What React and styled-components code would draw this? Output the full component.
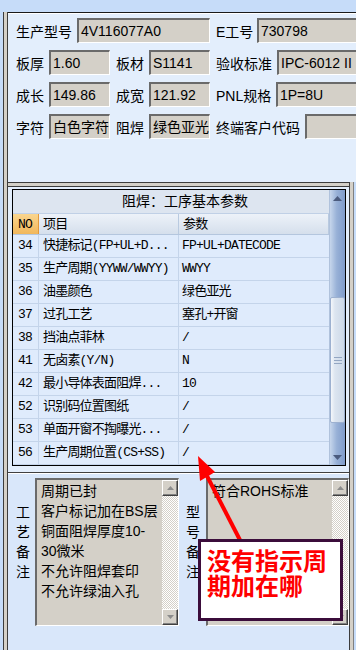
import React from 'react';
import styled, { createGlobalStyle } from 'styled-components';

const UI = `"Liberation Sans", "Noto Sans CJK SC", sans-serif`;
const GRID = `"Liberation Mono", "Noto Sans CJK SC", monospace`;

const GlobalStyle = createGlobalStyle`
  html, body { margin: 0; padding: 0; }
  body { width: 356px; height: 650px; overflow: hidden; background: #c6dcf9; }
`;

const Screen = styled.div`
  position: relative;
  width: 356px;
  height: 650px;
  display: flex;
  flex-direction: column;
  background: #c6dcf9;
  font-family: ${UI};
  color: #000;
  overflow: hidden;
`;

const TopStrip = styled.div`
  height: 12px;
  flex-shrink: 0;
`;

const Body = styled.div`
  flex: 1;
  display: flex;
  min-height: 0;
`;

const LeftRail = styled.div`
  flex-shrink: 0;
  width: 3px;
  margin-left: 3px;
  background: #d4d0c8;
  border-left: 1px solid #3c3c3c;
  border-right: 1px solid #3c3c3c;
`;

const Main = styled.div`
  flex: 1;
  display: flex;
  flex-direction: column;
  min-width: 0;
`;

/* ---------- top form ---------- */

const TopPanel = styled.div`
  height: 170px;
  flex-shrink: 0;
  box-sizing: border-box;
  border-top: 1px solid #1a1a1a;
  box-shadow: inset 0 1px #ffffff;
  background: #e3eefc;
  padding: 5px 0 0 8px;
  display: flex;
  flex-direction: column;
  gap: 7px;
  overflow: hidden;
`;

const FormRow = styled.div`
  display: flex;
  align-items: center;
  height: 25px;
`;

const Label = styled.span`
  flex-shrink: 0;
  width: ${p => p.$w}px;
  box-sizing: border-box;
  padding-left: ${p => (p.$first ? 0 : 6)}px;
  font-size: 14px;
  white-space: nowrap;
`;

const Field = styled.div`
  flex-shrink: 0;
  width: ${p => p.$w}px;
  height: 25px;
  box-sizing: border-box;
  background: #d4d0c8;
  border-style: solid;
  border-width: 2px 1px 1px 2px;
  border-color: #6a6a6a #ffffff #ffffff #6a6a6a;
  padding-left: 2px;
  font-size: 14px;
  line-height: 22px;
  white-space: nowrap;
  overflow: hidden;
`;

/* ---------- lower area ---------- */

const Lower = styled.div`
  flex: 1;
  display: flex;
  min-height: 0;
`;

const LowerMain = styled.div`
  flex: 1;
  display: flex;
  flex-direction: column;
  min-width: 0;
`;

const RightRail = styled.div`
  flex-shrink: 0;
  width: 3px;
  margin-right: 2px;
  background: #d4d0c8;
  border-left: 1px solid #3c3c3c;
  border-right: 1px solid #808080;
`;

const Splitter = styled.div`
  height: 3px;
  flex-shrink: 0;
  background: #d4d0c8;
  border-top: 1px solid #3c3c3c;
  border-bottom: 1px solid #3c3c3c;
`;

const MiddlePanel = styled.div`
  height: 286px;
  flex-shrink: 0;
  box-sizing: border-box;
  background: #e3eefc;
  padding: 2px 3px 0 4px;
  border-bottom: 1px solid #404040;
`;

const TableBox = styled.div`
  height: 277px;
  box-sizing: border-box;
  border: 1px solid #000;
  display: flex;
  background: #dfebfc;
`;

const Grid = styled.div`
  flex: 1;
  display: flex;
  flex-direction: column;
  min-width: 0;
`;

const Title = styled.div`
  height: 24px;
  box-sizing: border-box;
  border-bottom: 1px solid #c0d0e6;
  background: #dde5f0;
  padding-left: 109px;
  font-size: 14px;
  line-height: 23px;
  white-space: nowrap;
`;

const Cols = `grid-template-columns: 26px 140px 1fr;`;

const HeadRow = styled.div`
  display: grid;
  ${Cols}
  height: 21px;
  box-sizing: border-box;
  border-bottom: 1px solid #b4c6de;
`;

const HeadCell = styled.div`
  box-sizing: border-box;
  border-right: 1px solid ${p => (p.$no ? '#e39a3c' : '#b9cae0')};
  background: ${p =>
    p.$no
      ? 'linear-gradient(#fad58e, #f1b75c)'
      : 'linear-gradient(#edf2f9, #d5dfec)'};
  padding-left: ${p => (p.$no ? 5 : 4)}px;
  font-family: ${GRID};
  font-size: 13px;
  letter-spacing: -0.8px;
  line-height: 21px;
  white-space: nowrap;
  overflow: hidden;
`;

const DataRow = styled.div`
  display: grid;
  ${Cols}
  height: 23px;
  box-sizing: border-box;
  border-bottom: 1px solid #c4d4ea;
`;

const Cell = styled.div`
  box-sizing: border-box;
  border-right: 1px solid #c4d4ea;
  padding-left: ${p => p.$pad}px;
  font-family: ${GRID};
  font-size: 13px;
  letter-spacing: -0.8px;
  line-height: 22px;
  white-space: nowrap;
  overflow: hidden;
  &:last-child { border-right: none; }
`;

const VScroll = styled.div`
  flex-shrink: 0;
  width: 16px;
  display: flex;
  flex-direction: column;
  background: linear-gradient(90deg, #c6d6ec 0%, #98b1d7 45%, #7f9bca 100%);
  border-left: 1px solid #b0c2dc;
  box-sizing: border-box;
`;

const ArrowZone = styled.div`
  height: 16px;
  flex-shrink: 0;
  display: flex;
  align-items: center;
  justify-content: center;
`;

const Track = styled.div`
  height: ${p => p.$h}px;
  flex-shrink: 0;
`;

const Thumb = styled.div`
  height: 126px;
  flex-shrink: 0;
  box-sizing: border-box;
  border: 1px solid #9db1d0;
  border-radius: 2px;
  background: linear-gradient(90deg, #f4f7fb 0%, #dce5f0 30%, #ccd8e8 100%);
  display: flex;
  flex-direction: column;
  align-items: center;
  justify-content: center;
  gap: 2px;
`;

const Grip = styled.div`
  width: 8px;
  height: 1px;
  background: #93a6c2;
`;

/* ---------- bottom memos ---------- */

const BottomPanel = styled.div`
  flex: 1;
  display: flex;
  background: #d9e7fa;
  border-top: 1px solid #ffffff;
  padding: 4px 0 0 8px;
`;

const VLabel = styled.div`
  flex-shrink: 0;
  width: 14px;
  margin-left: ${p => p.$ml}px;
  margin-right: ${p => p.$mr}px;
  padding-top: 24px;
  font-size: 14px;
  line-height: 20px;
  display: flex;
  flex-direction: column;
`;

const Memo = styled.div`
  flex-shrink: 0;
  width: ${p => p.$w}px;
  height: 148px;
  box-sizing: border-box;
  border-style: solid;
  border-width: 2px 1px 1px 2px;
  border-color: #6a6a6a #ffffff #ffffff #6a6a6a;
  background: #d4d0c8;
  display: flex;
`;

const MemoText = styled.div`
  flex: 1;
  min-width: 0;
  padding: 1px 0 0 4px;
  font-size: 14px;
  line-height: 20px;
  white-space: nowrap;
  overflow: hidden;
`;

const MemoScroll = styled.div`
  flex-shrink: 0;
  width: 16px;
  display: flex;
  flex-direction: column;
`;

const Btn = styled.div`
  height: 16px;
  flex-shrink: 0;
  box-sizing: border-box;
  background: #d4d0c8;
  border: 1px solid;
  border-color: #ffffff #404040 #404040 #ffffff;
  box-shadow: inset -1px -1px #808080;
  display: flex;
  align-items: center;
  justify-content: center;
`;

const Dither = styled.div`
  flex: 1;
  background: repeating-conic-gradient(#ffffff 0 25%, #d4d0c8 0 50%) 0 0 / 2px 2px;
`;

/* ---------- annotation ---------- */

const Overlay = styled.svg`
  position: absolute;
  left: 0;
  top: 0;
  pointer-events: none;
`;

const Note = styled.div`
  position: absolute;
  left: 198px;
  top: 539px;
  width: 145px;
  height: 82px;
  box-sizing: border-box;
  border: 3px solid #3b0d3b;
  background: #ffffff;
  padding: 5px 0 0 6px;
  font-family: "Noto Sans CJK SC", sans-serif;
  font-weight: 700;
  font-size: 24px;
  line-height: 25px;
  color: #ff0000;
  white-space: nowrap;
`;

function Tri({ up, color, w = 9, h = 5 }) {
  const pts = up ? `0,${h} ${w / 2},0 ${w},${h}` : `0,0 ${w / 2},${h} ${w},0`;
  return (
    <svg width={w} height={h} viewBox={`0 0 ${w} ${h}`}>
      <polygon points={pts} fill={color} />
    </svg>
  );
}

const rows = [
  ['34', '快捷标记(FP+UL+D...', 'FP+UL+DATECODE'],
  ['35', '生产周期(YYWW/WWYY)', 'WWYY'],
  ['36', '油墨颜色', '绿色亚光'],
  ['37', '过孔工艺', '塞孔+开窗'],
  ['38', '挡油点菲林', '/'],
  ['41', '无卤素(Y/N)', 'N'],
  ['42', '最小导体表面阻焊...', '10'],
  ['52', '识别码位置图纸', '/'],
  ['53', '单面开窗不掏曝光...', '/'],
  ['56', '生产周期位置(CS+SS)', '/'],
];

function MemoBox({ w, lines }) {
  return (
    <Memo $w={w}>
      <MemoText>
        {lines.map(l => (
          <div key={l}>{l}</div>
        ))}
      </MemoText>
      <MemoScroll>
        <Btn><Tri up color="#8c8c8c" w={7} h={4} /></Btn>
        <Dither />
        <Btn><Tri color="#8c8c8c" w={7} h={4} /></Btn>
      </MemoScroll>
    </Memo>
  );
}

export default function App() {
  return (
    <>
      <GlobalStyle />
      <Screen>
        <TopStrip />
        <Body>
          <LeftRail />
          <Main>
            <TopPanel>
              <FormRow>
                <Label $first $w={61}>生产型号</Label>
                <Field $w={133}>4V116077A0</Field>
                <Label $w={47}>E工号</Label>
                <Field $w={120}>730798</Field>
              </FormRow>
              <FormRow>
                <Label $first $w={33}>板厚</Label>
                <Field $w={61}>1.60</Field>
                <Label $w={39}>板材</Label>
                <Field $w={61}>S1141</Field>
                <Label $w={67}>验收标准</Label>
                <Field $w={100}>IPC-6012 II</Field>
              </FormRow>
              <FormRow>
                <Label $first $w={33}>成长</Label>
                <Field $w={61}>149.86</Field>
                <Label $w={39}>成宽</Label>
                <Field $w={61}>121.92</Field>
                <Label $w={66}>PNL规格</Label>
                <Field $w={100}>1P=8U</Field>
              </FormRow>
              <FormRow>
                <Label $first $w={33}>字符</Label>
                <Field $w={61}>白色字符</Field>
                <Label $w={39}>阻焊</Label>
                <Field $w={61}>绿色亚光</Field>
                <Label $w={95}>终端客户代码</Label>
                <Field $w={80} />
              </FormRow>
            </TopPanel>
            <Lower>
              <LowerMain>
                <Splitter />
                <MiddlePanel>
                  <TableBox>
                    <Grid>
                      <Title>阻焊：工序基本参数</Title>
                      <HeadRow>
                        <HeadCell $no>NO</HeadCell>
                        <HeadCell>项目</HeadCell>
                        <HeadCell>参数</HeadCell>
                      </HeadRow>
                      {rows.map(([no, item, val]) => (
                        <DataRow key={no}>
                          <Cell $pad={5}>{no}</Cell>
                          <Cell $pad={4}>{item}</Cell>
                          <Cell $pad={3}>{val}</Cell>
                        </DataRow>
                      ))}
                    </Grid>
                    <VScroll>
                      <ArrowZone><Tri up color="#4b5b7e" /></ArrowZone>
                      <Track $h={91} />
                      <Thumb>
                        <Grip />
                        <Grip />
                        <Grip />
                      </Thumb>
                      <Track $h={26} />
                      <ArrowZone><Tri color="#4b5b7e" /></ArrowZone>
                    </VScroll>
                  </TableBox>
                </MiddlePanel>
                <BottomPanel>
                  <VLabel $ml={0} $mr={5}>
                    <span>工</span><span>艺</span><span>备</span><span>注</span>
                  </VLabel>
                  <MemoBox
                    w={144}
                    lines={['周期已封', '客户标记加在BS层', '铜面阻焊厚度10-', '30微米', '不允许阻焊套印', '不允许绿油入孔']}
                  />
                  <VLabel $ml={7} $mr={6}>
                    <span>型</span><span>号</span><span>备</span><span>注</span>
                  </VLabel>
                  <MemoBox w={143} lines={['符合ROHS标准']} />
                </BottomPanel>
              </LowerMain>
              <RightRail />
            </Lower>
          </Main>
        </Body>

        <Overlay width="356" height="650" viewBox="0 0 356 650">
          <line x1="207" y1="476" x2="241" y2="542" stroke="#ff0000" strokeWidth="4" />
          <polygon points="198,456 215,472 200,481" fill="#ff0000" />
        </Overlay>
        <Note>
          没有指示周
          <br />
          期加在哪
        </Note>
      </Screen>
    </>
  );
}
